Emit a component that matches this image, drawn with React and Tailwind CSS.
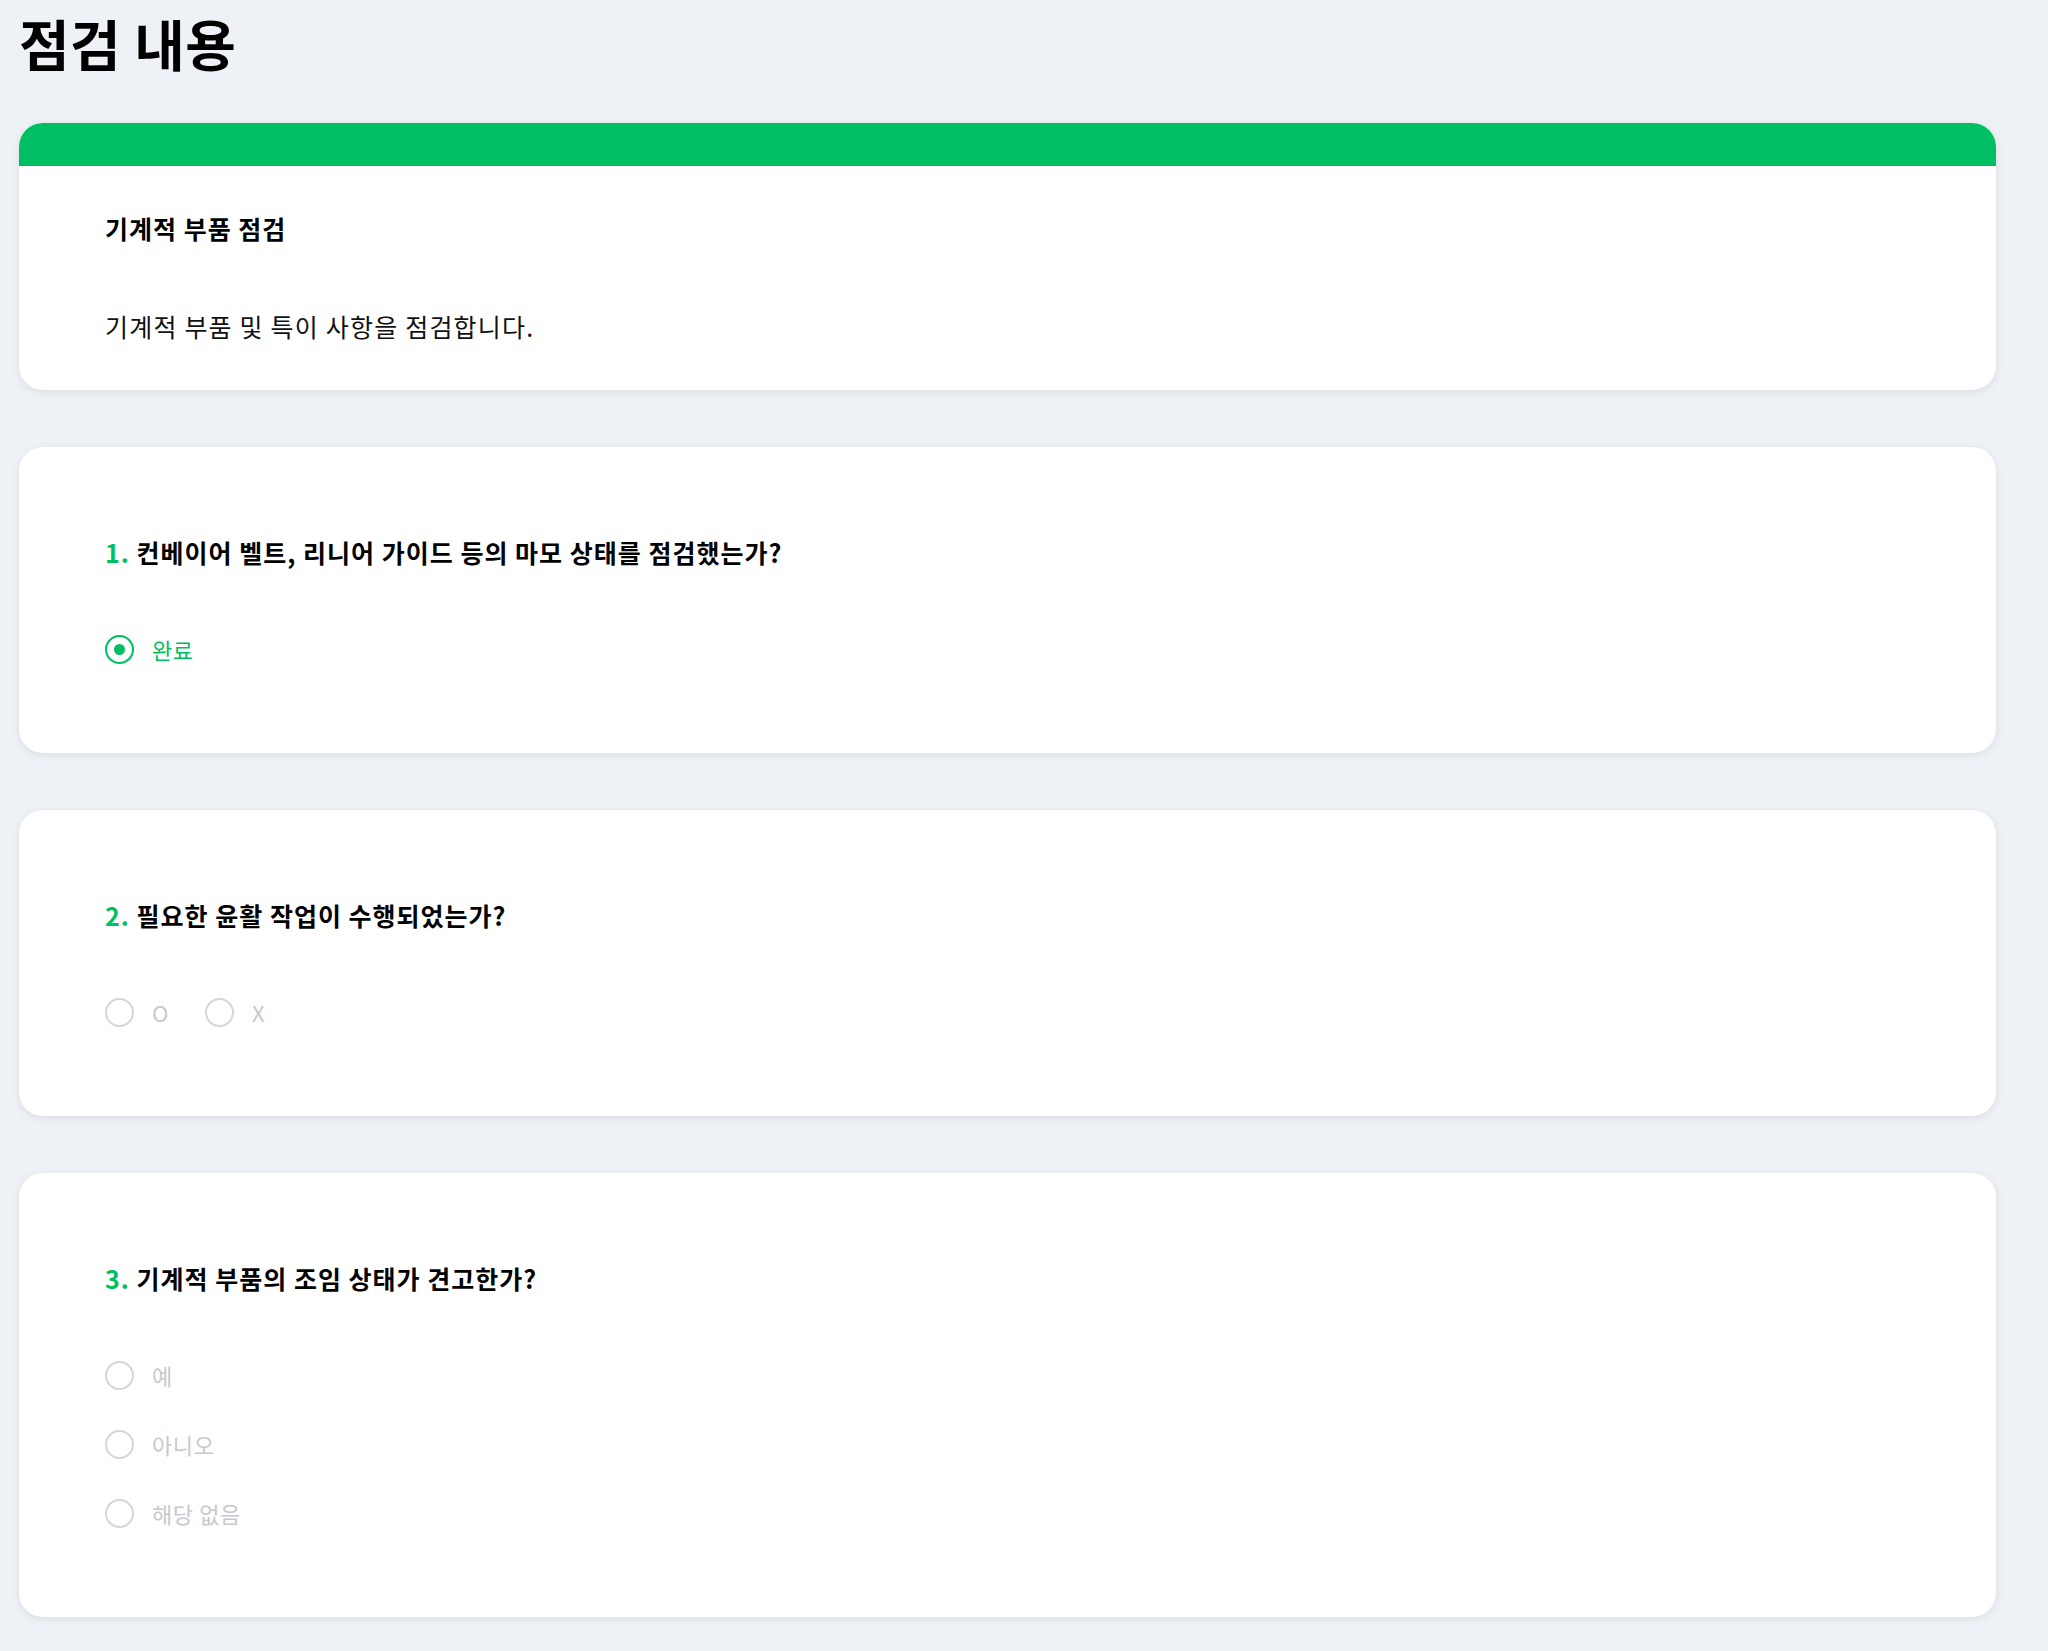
const questions = [
  {
    no: 1,
    text: "컨베이어 벨트, 리니어 가이드 등의 마모 상태를 점검했는가?",
    options: ["완료"],
    selected: "완료",
    layout: "row",
  },
  {
    no: 2,
    text: "필요한 윤활 작업이 수행되었는가?",
    options: ["O", "X"],
    selected: null,
    layout: "row",
  },
  {
    no: 3,
    text: "기계적 부품의 조임 상태가 견고한가?",
    options: ["예", "아니오", "해당 없음"],
    selected: null,
    layout: "col",
  },
];

const Radio = ({ label, checked }) => {
  return (
    <label className="flex items-center h-[30px] gap-[18px] cursor-pointer">
      {checked ? (
        <span className="flex items-center justify-center w-[29px] h-[29px] rounded-full border-[2.5px] border-[#00bf63]">
          <span className="w-[11px] h-[11px] rounded-full bg-[#00bf63]" />
        </span>
      ) : (
        <span className="w-[29px] h-[29px] rounded-full border-2 border-[#d3d6db]" />
      )}
      <span
        className={`text-[22px] leading-[30px] tracking-[0.6px] ${
          checked ? "text-[#00bf63]" : "text-[#c5c9cf]"
        }`}
      >
        {label}
      </span>
    </label>
  );
};

export default function App() {
  return (
    <div
      className="min-h-screen bg-[#eef2f6] pl-[19px] pr-[52px] pt-[10px] pb-[34px] text-black"
      style={{ fontFamily: '"Noto Sans CJK KR", "Noto Sans", sans-serif' }}
    >
      <h1 className="text-[55px] leading-[64px] font-bold tracking-[0.5px]">점검 내용</h1>

      <div className="flex flex-col gap-[57px] mt-[49px]">
        {/* section header card */}
        <section className="bg-white rounded-[24px] overflow-hidden shadow-[0_2px_8px_rgba(0,0,0,0.09)]">
          <div className="h-[43px] bg-[#00bf63]" />
          <div className="px-[86px] pt-[44px] pb-[46px]">
            <h2 className="text-[25px] leading-[36px] font-bold tracking-[1px]">기계적 부품 점검</h2>
            <p className="mt-[62px] text-[25px] leading-[36px] tracking-[1.2px] text-[#111]">
              기계적 부품 및 특이 사항을 점검합니다.
            </p>
          </div>
        </section>

        {/* question cards */}
        {questions.map((q) => {
          return (
            <section
              key={q.no}
              className="bg-white rounded-[24px] shadow-[0_2px_8px_rgba(0,0,0,0.09)] px-[86px] pt-[87px] pb-[89px]"
            >
              <h3 className="text-[25px] leading-[36px] font-bold tracking-[1px]">
                <span className="text-[#00bf63]">{q.no}.</span> {q.text}
              </h3>
              <div
                className={`mt-[64px] flex ${
                  q.layout === "col" ? "flex-col gap-[39px]" : "flex-row gap-[36px]"
                }`}
              >
                {q.options.map((opt) => (
                  <Radio key={opt} label={opt} checked={q.selected === opt} />
                ))}
              </div>
            </section>
          );
        })}
      </div>
    </div>
  );
}
